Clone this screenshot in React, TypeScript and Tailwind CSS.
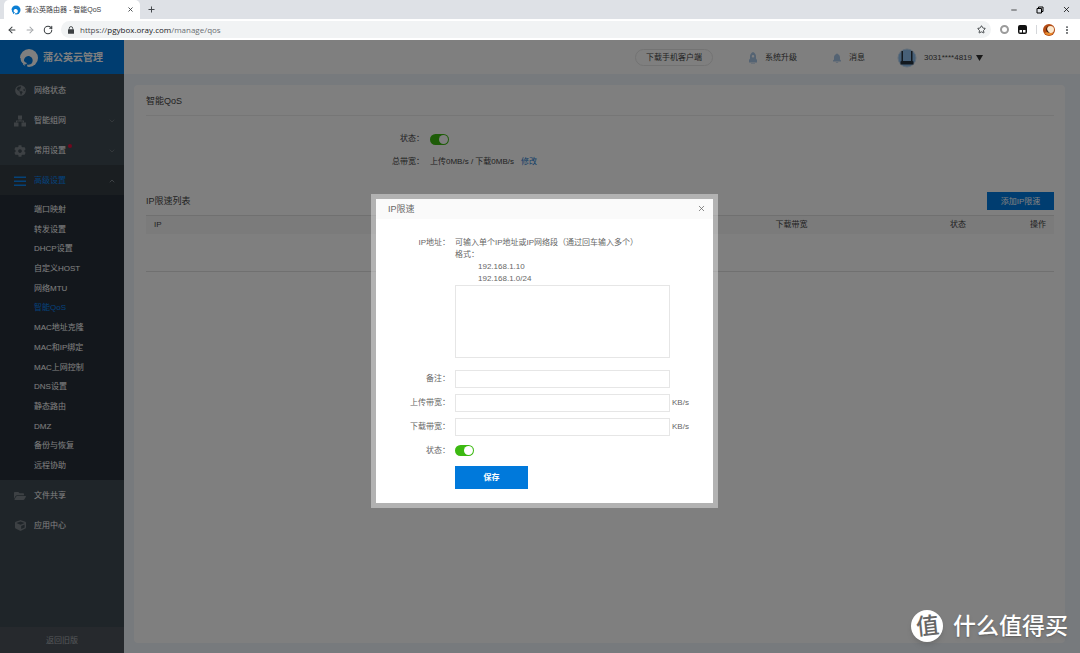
import React from "react";
import {
  ArrowLeft, ArrowRight, RotateCw, Star, X, Plus, Minus, MoreVertical,
  ChevronDown, ChevronUp,
} from "lucide-react";
import { FaGlobeAmericas, FaCog, FaFolderOpen, FaCube } from "react-icons/fa";

function Swirl({ className, fill, hole }: { className: string; fill: string; hole: string }) {
  return (
    <svg viewBox="0 0 40 40" className={className} aria-hidden="true">
      <circle cx="20" cy="20" r="18" fill={fill} />
      <path d="M11 21c2-4 7-6 11-4 5 2 7 8 4 13-2 3-6 4-10 3l1 7h-4l-2-8c-2-3-2-7 0-11z" fill={hole} />
      <path d="M0 24l8-3c2 6 4 8 8 9l-2 3-6-2z" fill={fill} />
      <path d="M0 20h3c0 5 2 9 6 12l-3 4-6-6z" fill={hole} />
    </svg>
  );
}

function Padlock() {
  return (
    <svg viewBox="0 0 14 18" className="h-2 w-[6px]" aria-hidden="true">
      <rect x="0" y="7" width="14" height="11" rx="1" fill="currentColor" />
      <path d="M3 8V5a4 4 0 018 0v3" fill="none" stroke="currentColor" strokeWidth="2" />
    </svg>
  );
}

function Tree() {
  return (
    <svg viewBox="0 0 24 24" className="size-3" fill="currentColor" aria-hidden="true">
      <rect x="8" y="1" width="8" height="8" />
      <rect x="0" y="15" width="9" height="8" />
      <rect x="15" y="15" width="9" height="8" />
      <path d="M11 9h2v2h7v4h-2v-2H6v2H4v-4h7z" />
    </svg>
  );
}

function Bars() {
  return (
    <svg viewBox="0 0 24 24" className="size-3" fill="currentColor" aria-hidden="true">
      <path d="M0 3h24v3H0zM0 11h24v3H0zM0 19h24v3H0z" />
    </svg>
  );
}

function Rocket() {
  return (
    <svg viewBox="0 0 16 24" className="h-3 w-2" fill="currentColor" aria-hidden="true">
      <path fillRule="evenodd" d="M8 0c4 2 6 5 6 9v4l2 3v5H0v-5l2-3V9c0-4 2-7 6-9zm0 6a2 2 0 100 5 2 2 0 000-5zM5 22h2v2H5zM9 22h2v2H9z" />
    </svg>
  );
}

function Bell() {
  return (
    <svg viewBox="0 0 16 20" className="h-[10px] w-2" fill="currentColor" aria-hidden="true">
      <path d="M8 0l1 2c3 1 5 3 5 7v4l2 2v2H0v-2l2-2V9c0-4 2-6 5-7zM5 18h6c-1 2-5 2-6 0z" />
    </svg>
  );
}

function Toggle({ id }: { id: string }) {
  return (
    <input
      id={id}
      type="checkbox"
      defaultChecked
      className="flex h-[11px] w-[19px] appearance-none items-center justify-end rounded-full bg-[#3cb911] px-px before:size-[9px] before:rounded-full before:bg-white before:content-['']"
    />
  );
}

const subItems = [
  "端口映射", "转发设置", "DHCP设置", "自定义HOST", "网络MTU", "智能QoS", "MAC地址克隆",
  "MAC和IP绑定", "MAC上网控制", "DNS设置", "静态路由", "DMZ", "备份与恢复", "远程协助",
];

function NavItem({ icon, label, chevron, dot, active }: {
  icon: React.ReactNode; label: string; chevron?: "up" | "down"; dot?: boolean; active?: boolean;
}) {
  return (
    <a
      href="#"
      className={
        "flex h-[30px] items-center pt-px pr-2 pl-[14px] " +
        (active ? "bg-[#343c42] text-[#0a84f0]" : "text-white")
      }
    >
      <span className={"mr-2 flex w-3 justify-center " + (active ? "" : "text-[#7a8288]")}>{icon}</span>
      <span className="relative">
        {label}
        {dot && <span className="absolute -top-px -right-[6px] size-1 rounded-full bg-[#e0103c]" />}
      </span>
      {chevron === "down" && <ChevronDown className="ml-auto size-2 text-[#7a8288]" />}
      {chevron === "up" && <ChevronUp className="ml-auto size-2 text-[#a0a8ae]" />}
    </a>
  );
}

function Browser() {
  return (
    <div className="shrink-0 text-[#3c4043]">
      <div className="flex h-[19px] items-center bg-[#dee1e6] pl-1">
        <div className="flex h-full w-[136px] items-center rounded-t-[5px] bg-white pr-[6px] pl-[7px]">
          <Swirl className="size-[10px]" fill="#0b7fd4" hole="#ffffff" />
          <span className="ml-1 flex-1 text-[7px]">蒲公英路由器 - 智能QoS</span>
          <button aria-label="关闭标签页"><X className="size-[7px]" strokeWidth={3} /></button>
        </div>
        <button aria-label="新标签页" className="ml-[7px]"><Plus className="size-[9px]" strokeWidth={2.5} /></button>
        <div className="ml-auto flex gap-[18px] pr-[9px] text-black">
          <button aria-label="最小化"><Minus className="size-2" /></button>
          <button aria-label="还原">
            <svg viewBox="0 0 16 16" className="size-2" fill="none" stroke="currentColor" strokeWidth="2" aria-hidden="true">
              <path d="M2 5h9v9H2zM5 5V2h9v9h-3" />
            </svg>
          </button>
          <button aria-label="关闭"><X className="size-[9px]" /></button>
        </div>
      </div>
      <div className="flex h-[21px] items-center bg-white pr-2 pl-[7px]">
        <button aria-label="后退"><ArrowLeft className="size-[10px]" strokeWidth={2.5} /></button>
        <button aria-label="前进" className="ml-2 text-[#a5a8ab]"><ArrowRight className="size-[10px]" strokeWidth={2.5} /></button>
        <button aria-label="重新加载" className="ml-2"><RotateCw className="size-[10px]" strokeWidth={2.5} /></button>
        <div className="ml-2 flex h-[17px] flex-1 items-center rounded-full bg-[#f1f3f4] pr-[5px] pl-[7px]">
          <Padlock />
          <span className="ml-[6px] flex-1 font-['Open_Sans','Noto_Sans_CJK_SC',sans-serif] text-[8px] text-[#6a6e72]">
            <span className="text-[#4a4d50]">https://</span><span className="text-[#202124]">pgybox.oray.com</span>/manage/qos
          </span>
          <button aria-label="收藏"><Star className="size-[9px]" strokeWidth={2.5} /></button>
        </div>
        <span className="ml-[9px] size-[9px] rounded-full border-2 border-[#9b9b9b]" />
        <svg viewBox="0 0 18 18" className="ml-[9px] size-[9px]" aria-hidden="true">
          <rect width="18" height="18" rx="4" fill="#111" />
          <path d="M3 10h5v5H3zM10 10h5v5h-5z" fill="#fff" />
        </svg>
        <span className="mr-[6px] ml-[9px] h-[9px] w-px bg-[#d5d7da]" />
        <svg viewBox="0 0 24 24" className="size-3" aria-hidden="true">
          <circle cx="12" cy="12" r="12" fill="#b34a12" />
          <path d="M3 18c4 5 12 6 17 1l-4-4-8 1z" fill="#e98a2c" />
          <circle cx="15" cy="11" r="7" fill="#fbe9cf" />
          <path d="M11 3c-5 5-3 11 3 15-8 0-11-10-3-15z" fill="#3a1a0c" />
        </svg>
        <button aria-label="菜单" className="ml-[7px]"><MoreVertical className="size-[10px]" strokeWidth={2.5} /></button>
      </div>
    </div>
  );
}

function Sidebar() {
  return (
    <aside className="flex w-[124px] shrink-0 flex-col bg-[#3e4a52]">
      <a href="#" className="flex h-[34px] items-center gap-1 bg-[#007ae0] pt-px pl-[19px] text-[10px] font-bold text-white">
        <Swirl className="size-5" fill="#ffffff" hole="#007ae0" />
        蒲公英云管理
      </a>
      <nav className="pt-px">
        <NavItem icon={<FaGlobeAmericas className="size-[11px]" />} label="网络状态" />
        <NavItem icon={<Tree />} label="智能组网" chevron="down" />
        <NavItem icon={<FaCog className="size-3" />} label="常用设置" chevron="down" dot />
        <NavItem icon={<Bars />} label="高级设置" chevron="up" active />
        <ul className="flex h-[285px] flex-col bg-[#262e38] pt-[5px] pb-1 pl-[34px]">
          {subItems.map((s) => (
            <li key={s} className="flex flex-1 items-center">
              <a href="#" className={s === "智能QoS" ? "text-[#0a84f0]" : "text-white"}>{s}</a>
            </li>
          ))}
        </ul>
        <NavItem icon={<FaFolderOpen className="size-3" />} label="文件共享" />
        <NavItem icon={<FaCube className="size-[11px]" />} label="应用中心" />
      </nav>
      <a href="#" className="mt-auto flex h-[26px] items-center justify-center bg-[#4c535b] pt-px text-[#a8acb0]">返回旧版</a>
    </aside>
  );
}

function TopBar() {
  return (
    <header className="flex h-[34px] items-center justify-end gap-9 bg-white pt-px pr-[97px] text-[#444]">
      <button className="h-[17px] rounded-full border border-[#e6e6e6] px-[10px]">下载手机客户端</button>
      <a href="#" className="flex items-center gap-2">
        <span className="text-[#a9c6e6]"><Rocket /></span>系统升级
      </a>
      <a href="#" className="flex items-center gap-2">
        <span className="text-[#a9c6e6]"><Bell /></span>消息
      </a>
      <button className="-ml-1 flex items-center">
        <svg viewBox="0 0 40 40" className="size-5" aria-hidden="true">
          <circle cx="20" cy="20" r="18" fill="#8fc0f0" stroke="#c5dcf2" strokeWidth="2" />
          <path d="M9 6h3v20h16V6h3v20l2 1v6H7v-6l2-1z" fill="#26323e" />
        </svg>
        <span className="ml-[7px]">3031****4819</span>
        <svg viewBox="0 0 12 10" className="ml-1 h-[6px] w-[7px]" aria-hidden="true"><path d="M0 0h12L6 10z" fill="#333" /></svg>
      </button>
    </header>
  );
}

function QosCard() {
  return (
    <main className="mt-[11px] mr-[15px] mb-[10px] ml-[10px] flex-1 rounded-[4px] bg-white pr-[11px] pl-3 text-[#444]">
      <h1 className="flex h-[31px] items-center border-b border-[#ececec] pt-px text-[9px]">智能QoS</h1>
      <div className="flex flex-col gap-[5px] pt-[14px]">
        <div className="flex h-[18px] items-center">
          <label htmlFor="qos" className="w-[278px] text-right">状态：</label>
          <span className="ml-[6px]"><Toggle id="qos" /></span>
        </div>
        <div className="flex h-[18px] items-center">
          <span className="w-[278px] text-right">总带宽：</span>
          <span className="ml-[6px]">上传0MB/s / 下载0MB/s</span>
          <a href="#" className="ml-[7px] text-[#2a7fd0]">修改</a>
        </div>
      </div>
      <div className="mt-[21px] flex items-center justify-between">
        <h2 className="text-[9px]">IP限速列表</h2>
        <button className="h-[18px] w-[67px] bg-[#007ae0] pt-px text-white">添加IP限速</button>
      </div>
      <table className="mt-[5px] w-full table-fixed border-y border-[#e0e0e0] text-left">
        <thead>
          <tr className="h-[18px] bg-[#f7f7f7]">
            <th className="w-[69%] pl-2 font-normal">IP</th>
            <th className="w-[19%] pl-[3px] font-normal">下载带宽</th>
            <th className="pl-[5px] font-normal">状态</th>
            <th className="pr-2 text-right font-normal">操作</th>
          </tr>
        </thead>
        <tbody>
          <tr className="h-[38px]"><td colSpan={4} /></tr>
        </tbody>
      </table>
    </main>
  );
}

const inputCls = "w-[215px] border border-[#e6e6e6] bg-white px-1 text-[#555] outline-none";
const labelCls = "w-[74px] text-right";

function LimitDialog() {
  return (
    <div className="absolute inset-0 flex items-center justify-center bg-black/50 pt-2 pl-[9px]">
      <div role="dialog" aria-labelledby="dlg-title" className="bg-white/40 p-[5px] text-[#666]">
        <div className="w-[337px] bg-white">
          <div className="flex h-5 items-center justify-between bg-[#fafafa] pr-[7px] pl-3">
            <h2 id="dlg-title" className="text-[9px]">IP限速</h2>
            <button aria-label="关闭"><X className="size-[9px]" strokeWidth={2} /></button>
          </div>
          <form className="flex flex-col gap-[6px] pt-[18px] pb-[14px]" onSubmit={(e) => e.preventDefault()}>
            <div className="mb-[6px] flex gap-[5px]">
              <label htmlFor="ip" className={labelCls}>IP地址：</label>
              <div>
                <p>可输入单个IP地址或IP网络段（通过回车输入多个）</p>
                <p>格式：</p>
                <p className="pl-[23px]">192.168.1.10</p>
                <p className="pl-[23px]">192.168.1.0/24</p>
                <textarea id="ip" className={inputCls + " block h-[73px] resize-none"} />
              </div>
            </div>
            <div className="flex items-center gap-[5px]">
              <label htmlFor="note" className={labelCls + " pt-px"}>备注：</label>
              <input id="note" className={inputCls + " h-[18px]"} />
            </div>
            <div className="flex items-center gap-[5px]">
              <label htmlFor="up" className={labelCls + " pt-px"}>上传带宽：</label>
              <input id="up" className={inputCls + " h-[18px]"} />
              <span className="-ml-[3px]">KB/s</span>
            </div>
            <div className="flex items-center gap-[5px]">
              <label htmlFor="down" className={labelCls + " pt-px"}>下载带宽：</label>
              <input id="down" className={inputCls + " h-[18px]"} />
              <span className="-ml-[3px]">KB/s</span>
            </div>
            <div className="flex h-[18px] items-center gap-[5px]">
              <label htmlFor="enable" className={labelCls + " pt-px"}>状态：</label>
              <Toggle id="enable" />
            </div>
            <div className="pl-[79px]">
              <button className="block h-[23px] w-[73px] bg-[#0079db] pt-px font-bold text-white">保存</button>
            </div>
          </form>
        </div>
      </div>
    </div>
  );
}

export default function App() {
  return (
    <div className="flex min-h-screen flex-col font-['Liberation_Sans','Noto_Sans_CJK_SC',sans-serif] text-[8px] leading-[12px]">
      <Browser />
      <div className="relative flex flex-1">
        <Sidebar />
        <div className="flex min-w-0 flex-1 flex-col bg-[#eef4fa]">
          <TopBar />
          <QosCard />
        </div>
        <LimitDialog />
        <div className="absolute right-3 bottom-[11px] flex items-center gap-[10px] text-white">
          <span className="flex size-8 items-center justify-center rounded-full bg-white text-[23px] leading-8 font-medium text-[#666] shadow-md">
            <span className="-rotate-6">值</span>
          </span>
          <span className="text-[23px] leading-8 font-medium text-shadow-md">什么值得买</span>
        </div>
      </div>
    </div>
  );
}
